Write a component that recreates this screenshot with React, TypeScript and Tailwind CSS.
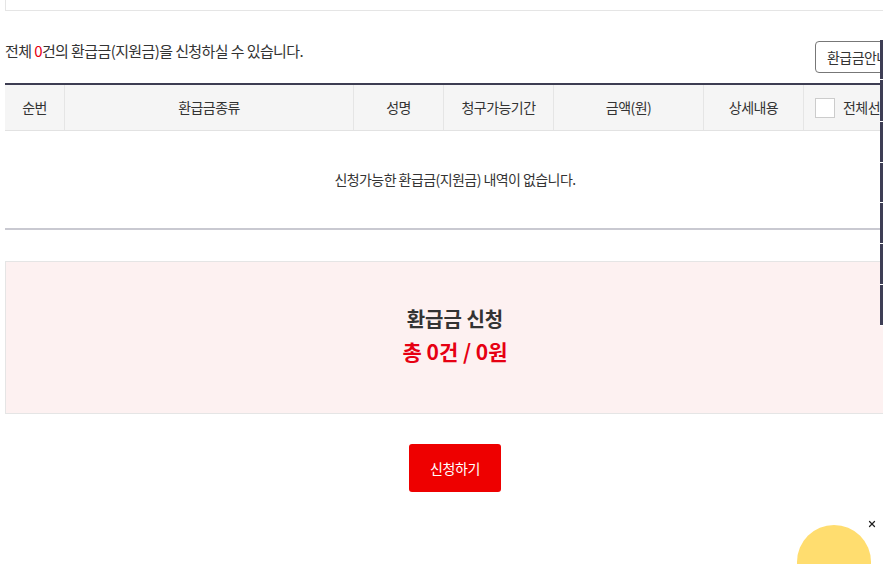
import { X } from 'lucide-react';

const font = { fontFamily: '"Noto Sans CJK KR", "Noto Sans", sans-serif' };

const cols = [
  { label: '순번', w: 'w-[60px]' },
  { label: '환급금종류', w: 'w-[289px]' },
  { label: '성명', w: 'w-[90px]' },
  { label: '청구가능기간', w: 'w-[110px]' },
  { label: '금액(원)', w: 'w-[150px]' },
  { label: '상세내용', w: 'w-[100px]' },
];

const quickSegments = [40, 42, 41, 40, 41, 41, 41];

export default function App() {
  return (
    <div className="relative h-[564px] w-full overflow-hidden bg-white text-[#333]" style={font}>
      <div className="ml-[5px] w-[900px]">
        {/* top box remnant */}
        <div className="h-[11px] border border-t-0 border-[#e5e5e5]" />

        {/* summary row */}
        <div className="mt-[30px] flex items-start justify-between">
          <p className="text-[15px] leading-[20px] tracking-[-0.04em]">
            전체 <span className="text-[#e60012]">0</span>건의 환급금(지원금)을 신청하실 수 있습니다.
          </p>
          <button className="h-[32px] w-[90px] rounded-[4px] border border-[#777] bg-white pl-[11px] text-left text-[14px] tracking-[-0.04em] text-[#333]">
            환급금안내
          </button>
        </div>

        {/* table */}
        <div className="mt-[10px] border-t-2 border-[#3d3d52]">
          <div className="flex h-[46px] border-b border-[#e2e2e2] bg-[#f5f5f5] text-[14px] tracking-[-0.04em]">
            {cols.map((c) => (
              <div
                key={c.label}
                className={`${c.w} flex items-center justify-center border-r border-[#e5e5e5]`}
              >
                {c.label}
              </div>
            ))}
            <div className="flex flex-1 items-center pl-[11px]">
              <span className="mr-[8px] inline-block h-[20px] w-[20px] border border-[#ccc] bg-white" />
              전체선택
            </div>
          </div>
          <div className="flex h-[99px] items-center justify-center border-b-2 border-[#c9c9d1] text-[14px] tracking-[-0.04em]">
            신청가능한 환급금(지원금) 내역이 없습니다.
          </div>
        </div>

        {/* total box */}
        <div className="mt-[31px] flex h-[153px] flex-col items-center justify-center border border-[#e5e5e5] bg-[#fdf1f1] pb-[5px]">
          <div className="text-[20px] font-bold leading-[32px] text-[#333]">환급금 신청</div>
          <div className="text-[21px] font-bold leading-[32px] text-[#e60012]">총 0건 / 0원</div>
        </div>

        <div className="mt-[30px] flex justify-center">
          <button className="h-[48px] w-[92px] rounded-[3px] bg-[#ee0000] text-[14px] tracking-[-0.03em] text-white">
            신청하기
          </button>
        </div>
      </div>

      {/* quick menu bar at right edge */}
      <div className="absolute right-0 top-[40px] flex w-[3px] flex-col">
        {quickSegments.map((h, i) => (
          <div key={i} className="border-b border-white bg-[#3e3e55]" style={{ height: h }} />
        ))}
      </div>

      {/* floating widget */}
      <div className="absolute left-[797px] top-[525px] h-[74px] w-[74px] rounded-full bg-[#ffdd6f]" />
      <X className="absolute left-[867px] top-[519px] text-[#222]" size={10} strokeWidth={3} />
    </div>
  );
}
